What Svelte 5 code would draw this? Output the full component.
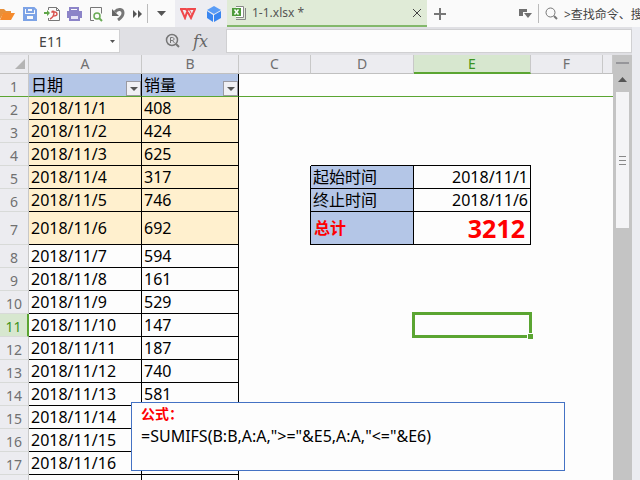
<script lang="ts">
  type Row = { date: string; sales: string };

  const columns = ['A', 'B', 'C', 'D', 'E', 'F', ''];

  const rows: Row[] = [
    { date: '2018/11/1', sales: '408' },
    { date: '2018/11/2', sales: '424' },
    { date: '2018/11/3', sales: '625' },
    { date: '2018/11/4', sales: '317' },
    { date: '2018/11/5', sales: '746' },
    { date: '2018/11/6', sales: '692' },
    { date: '2018/11/7', sales: '594' },
    { date: '2018/11/8', sales: '161' },
    { date: '2018/11/9', sales: '529' },
    { date: '2018/11/10', sales: '147' },
    { date: '2018/11/11', sales: '187' },
    { date: '2018/11/12', sales: '740' },
    { date: '2018/11/13', sales: '581' },
    { date: '2018/11/14', sales: '' },
    { date: '2018/11/15', sales: '' },
    { date: '2018/11/16', sales: '' },
    { date: '', sales: '' }
  ];

  // summary block in D5:E7, keyed by row number
  const summary: Record<number, [string, string]> = {
    5: ['起始时间', '2018/11/1'],
    6: ['终止时间', '2018/11/6'],
    7: ['总计', '3212']
  };

  let cellName = $state('E11');
  let formula = $state('');
  let query = $state('>查找命令、搜');
</script>

<div class="app">
  <header class="topbar">
    <div class="tools">
      <button class="first" aria-label="Open">
        <svg width="16" height="16" viewBox="0 0 16 16">
          <path d="M0 3h4l2 2h5v3H3L0 13z" fill="#e8903a" />
          <path d="M3 7h12l-4 7H0z" fill="#f58a2c" />
        </svg>
      </button>
      <button aria-label="Save">
        <svg width="16" height="16" viewBox="0 0 16 16" fill="none" stroke="#7da3e6" stroke-width="2">
          <path d="M2 2h10l2 2v10H2z" />
          <path d="M5 2v4h6V2M4 14V9h8v5" />
        </svg>
      </button>
      <button aria-label="Export PDF">
        <svg width="17" height="16" viewBox="0 0 17 16" fill="none">
          <path d="M4.500 4V1.500h8l3 3v10h-11V12" stroke="#777" />
          <path d="M12.500 1.500v3h3" stroke="#777" />
          <path d="M6 13c2-1 4-4 4-7 0-1-2-1-2 0 0 0 5-1 5 2 0 2-3 2-4 2" stroke="#d9534f" stroke-width="1.400" />
          <path d="M0 6h3V4l3 3-3 3V8H0z" fill="#5fa548" />
        </svg>
      </button>
      <button aria-label="Print">
        <svg width="16" height="16" viewBox="0 0 16 16">
          <path d="M4 2h8v3H4z" fill="none" stroke="#8c84c8" stroke-width="2" />
          <path d="M1 5h15v7H1z" fill="#8c84c8" />
          <path d="M4 9h9v5H4z" fill="#e6e3f6" stroke="#8c84c8" stroke-width="2" />
        </svg>
      </button>
      <button aria-label="Print preview">
        <svg width="16" height="16" viewBox="0 0 16 16" fill="none">
          <path d="M6 14.500H2.500v-13h11v6" stroke="#777" />
          <circle cx="9" cy="10" r="3" stroke="#6aab55" stroke-width="1.500" />
          <path d="M11 12l3 3" stroke="#6aab55" stroke-width="2" />
        </svg>
      </button>
      <button aria-label="Undo">
        <svg width="14" height="14" viewBox="0 0 14 14">
          <path d="M4 5c3-4 8-3 8 1 0 3-2 5-5 7" fill="none" stroke="#777" stroke-width="3" />
          <path d="M1 2v7h7z" fill="#666" />
        </svg>
      </button>
      <button class="narrow" aria-label="More tools">
        <svg width="10" height="8" viewBox="0 0 10 8" fill="#555">
          <path d="M0 0l4 4-4 4zM5 0l4 4-4 4z" />
        </svg>
      </button>
    </div>
    <span class="divider"></span>
    <button class="menu" aria-label="Customize">
      <svg width="9" height="5" viewBox="0 0 9 5"><path d="M0 0h9L4.500 5z" fill="#555" /></svg>
    </button>
    <div class="home-tabs">
      <button aria-label="WPS home">
        <svg width="16" height="12" viewBox="0 0 16 12" fill="none" stroke="#f0484c" stroke-width="2">
          <path d="M0 1h6l5 9 4-9H8L5 10 1 1" />
          <path d="M9 1l3 6" stroke-width="1" />
        </svg>
      </button>
      <button aria-label="Documents">
        <svg width="16" height="16" viewBox="0 0 16 16">
          <path d="M8 0l7 4-7 4-7-4z" fill="#5a9cf6" />
          <path d="M1 5l6 4v7l-6-4zM15 5L8 9v7l7-4z" fill="#3a86f0" />
        </svg>
      </button>
    </div>
    <div class="file-tab">
      <svg width="15" height="15" viewBox="0 0 15 15" fill="none">
        <path d="M4 1.500h7.500v11H4" fill="#fff" stroke="#888" />
        <path d="M4 14.500h9.500V3" stroke="#888" />
        <path d="M0 3h9v8H0z" fill="#4d9b3a" />
        <path d="M2.500 4.500l4 5M6.500 4.500l-4 5" stroke="#fff" stroke-width="1.500" />
      </svg>
      <span class="file-name">1-1.xlsx *</span>
      <button class="close" aria-label="Close tab">
        <svg width="8" height="8" viewBox="0 0 8 8" stroke="#444"><path d="M0 0l8 8M8 0L0 8" /></svg>
      </button>
    </div>
    <button class="add" aria-label="New tab">
      <svg width="12" height="12" viewBox="0 0 12 12" stroke="#777" stroke-width="2"><path d="M6 0v12M0 6h12" /></svg>
    </button>
    <button class="layout" aria-label="Window list">
      <svg width="13" height="10" viewBox="0 0 13 10" fill="#707070">
        <path d="M0 0h8v3H4v4H0z" />
        <path d="M5 4h8L9 9z" />
      </svg>
    </button>
    <span class="divider"></span>
    <label class="search">
      <svg width="13" height="13" viewBox="0 0 13 13" fill="none" stroke="#777">
        <circle cx="5.500" cy="5.500" r="4.500" />
        <path d="M9 9l3 3" stroke-width="2" />
      </svg>
      <input type="text" aria-label="Search commands" bind:value={query} />
    </label>
  </header>

  <div class="workspace">
    <main>
      <div class="formula-bar">
        <label class="name-box">
          <input type="text" aria-label="Cell name" bind:value={cellName} />
          <svg width="5" height="3" viewBox="0 0 5 3"><path d="M0 0h5L2.500 3z" fill="#555" /></svg>
        </label>
        <div class="formula-tools">
          <button aria-label="Find">
            <svg width="16" height="16" viewBox="0 0 16 16" fill="none" stroke="#777">
              <circle cx="7" cy="7" r="5.500" stroke-width="1.500" />
              <path d="M5.500 10V4.500h2c2 0 2 3 0 3h-2M7.500 7.500l2 2.500" />
              <path d="M11 11l3 3" stroke-width="2" />
            </svg>
          </button>
          <button class="fx" aria-label="Insert function">fx</button>
        </div>
        <input class="formula" type="text" aria-label="Formula" bind:value={formula} />
      </div>

      <div class="body">
        <div class="sheet">
          <table>
            <colgroup>
              <col class="w-num" /><col class="w-a" /><col class="w-b" /><col class="w-c" />
              <col class="w-d" /><col class="w-e" /><col class="w-c" /><col />
            </colgroup>
            <thead>
              <tr>
                <th class="corner"><svg width="10" height="10" viewBox="0 0 10 10"><path d="M10 0v10H0z" fill="#b4b4b4" /></svg></th>
                {#each columns as col}
                  <th class:current={col === 'E'}>{col}</th>
                {/each}
              </tr>
            </thead>
            <tbody>
              <tr class="titles">
                <th>1</th>
                {#each ['日期', '销量'] as title}
                  <td class="data">
                    <div class="title">
                      {title}
                      <button class="filter" aria-label="Filter {title}">
                        <svg width="8" height="4" viewBox="0 0 8 4"><path d="M0 0h8L4 4z" fill="#555" /></svg>
                      </button>
                    </div>
                  </td>
                {/each}
                <td></td><td></td><td></td><td></td><td></td>
              </tr>
              {#each rows as row, i}
                {@const n = i + 2}
                <tr class:picked={n < 8} class:tall={n === 7}>
                  <th class:current={n === 11}>{n < 18 ? n : ''}</th>
                  <td class="data">{row.date}</td>
                  <td class="data">{row.sales}</td>
                  {#if summary[n]}
                    <td class="edge-right"></td>
                    <td class="data caption" class:total={n === 7}>{summary[n][0]}</td>
                    <td class="data value" class:total={n === 7}>{summary[n][1]}</td>
                  {:else}
                    <td></td>
                    <td class:edge-bottom={n === 4}></td>
                    <td class:edge-bottom={n === 4} class:selected={n === 11}></td>
                  {/if}
                  <td></td>
                  <td></td>
                </tr>
              {/each}
            </tbody>
          </table>
          <div class="note">
            <strong>公式：</strong>
            <span>=SUMIFS(B:B,A:A,"&gt;="&amp;E5,A:A,"&lt;="&amp;E6)</span>
          </div>
        </div>
        <div class="scrollbar">
          <span class="split"></span>
          <button aria-label="Scroll up">
            <svg width="9" height="5" viewBox="0 0 9 5"><path d="M0 5h9L4.500 0z" fill="#555" /></svg>
          </button>
          <div class="thumb"><i></i><i></i><i></i></div>
        </div>
      </div>
    </main>
    <aside></aside>
  </div>
</div>

<style>
  .app {
    display: flex;
    flex-direction: column;
    height: 100vh;
    overflow: hidden;
    background: #fdfdfd;
    color: #000;
    font-family: 'Noto Sans', 'Noto Sans CJK SC', sans-serif;
    font-size: 16px;
  }

  button {
    display: flex;
    align-items: center;
    justify-content: center;
    flex-shrink: 0;
    padding: 0;
    border: 0;
    background: none;
  }

  input {
    min-width: 0;
    padding: 0;
    border: 0;
    outline: 0;
    background: none;
    font-family: inherit;
  }

  svg {
    display: block;
    flex-shrink: 0;
  }

  .topbar {
    display: flex;
    align-items: stretch;
    height: 27px;
    flex-shrink: 0;
    background: #fafafa;
  }

  .tools {
    display: flex;
  }

  .tools button {
    width: 22px;
  }

  .tools .first {
    width: 19px;
    justify-content: flex-start;
  }

  .tools .narrow {
    width: 18px;
  }

  .divider {
    width: 1px;
    margin: 4px 0;
    background: #bbb;
  }

  .menu {
    width: 27px;
  }

  .home-tabs {
    display: flex;
    background: #ededf2;
  }

  .home-tabs button {
    width: 26px;
  }

  .file-tab {
    display: flex;
    align-items: center;
    box-sizing: border-box;
    width: 200px;
    padding: 0 6px 0 5px;
    border-bottom: 2px solid #83b86b;
    background: #e0ebd7;
  }

  .file-name {
    flex: 1;
    padding-left: 5px;
    color: #555;
    font-size: 12px;
  }

  .add {
    width: 26px;
  }

  .layout {
    width: 25px;
    margin-left: auto;
  }

  .search {
    display: flex;
    align-items: center;
    gap: 6px;
    width: 95px;
    padding-left: 6px;
  }

  .search input {
    flex: 1;
    color: #444;
    font-size: 12px;
  }

  .workspace {
    display: flex;
    flex: 1;
    min-height: 0;
  }

  main {
    display: flex;
    flex: 1;
    flex-direction: column;
    min-width: 0;
  }

  aside {
    width: 8px;
    background: #ebecf1;
  }

  .formula-bar {
    display: flex;
    height: 24px;
    flex-shrink: 0;
    padding: 2px 0;
    background: #e0e0e4;
  }

  .name-box {
    display: flex;
    align-items: center;
    box-sizing: border-box;
    width: 120px;
    padding-right: 4px;
    border: 1px solid #d0d0d2;
    border-left: 0;
    background: #fdfdfd;
  }

  .name-box input {
    flex: 1;
    padding-left: 12px;
    padding-right: 20px;
    color: #444;
    font-size: 14px;
    text-align: center;
  }

  .formula-tools {
    display: flex;
    align-items: center;
    justify-content: flex-end;
    gap: 12px;
    width: 106px;
    padding-right: 18px;
    box-sizing: border-box;
  }

  .fx {
    color: #666;
    font-family: 'DejaVu Serif', serif;
    font-size: 16px;
    font-style: italic;
  }

  .formula {
    flex: 1;
    border: 1px solid #d0d0d2;
    background: #fdfdfd;
  }

  .body {
    display: flex;
    flex: 1;
    min-height: 0;
  }

  .sheet {
    position: relative;
    flex: 1;
    overflow: hidden;
  }

  table {
    width: 100%;
    table-layout: fixed;
    border-spacing: 0;
  }

  .w-num { width: 29px; }
  .w-a { width: 113px; }
  .w-b { width: 97px; }
  .w-c { width: 72px; }
  .w-d { width: 103px; }
  .w-e { width: 117px; }

  th {
    box-sizing: border-box;
    padding: 0;
    border-right: 1px solid #c8c8c8;
    border-bottom: 1px solid #d8dad8;
    background: #ececf0;
    color: #707070;
    font-size: 14px;
    font-weight: normal;
    line-height: 18px;
  }

  thead th {
    height: 19px;
    border-bottom-color: #c0c0c0;
  }

  .corner svg {
    margin-left: auto;
    margin-right: 3px;
  }

  th.current {
    background: #d7e7cf;
    color: #3d9320;
  }

  thead th.current {
    border-bottom: 2px solid #5ba532;
    line-height: 17px;
  }

  tbody th {
    padding-top: 3px;
  }

  tbody th.current {
    border-right: 2px solid #5ba532;
  }

  td {
    box-sizing: border-box;
    height: 23px;
    padding: 0;
    line-height: 22px;
    white-space: nowrap;
  }

  .data {
    padding-left: 2px;
    border-right: 1px solid #000;
    border-bottom: 1px solid #000;
  }

  .titles th,
  .titles td {
    border-bottom: 1px solid #5ba532;
  }

  .titles .data,
  .caption {
    background: #b4c6e7;
  }

  .title {
    display: flex;
    align-items: flex-end;
    justify-content: space-between;
    height: 22px;
  }

  .filter {
    box-sizing: border-box;
    width: 15px;
    height: 15px;
    border: 1px solid #9a9aa2;
    background: #f0f0f4;
  }

  .picked .data:nth-child(-n + 3) {
    background: #fff0ce;
  }

  .tall td {
    height: 33px;
  }

  .edge-right {
    border-right: 1px solid #000;
  }

  .edge-bottom {
    border-bottom: 1px solid #000;
  }

  .value {
    padding-right: 2px;
    text-align: right;
  }

  .total {
    padding-left: 3px;
    color: #f00;
    font-weight: bold;
  }

  .value.total {
    padding-right: 5px;
    font-size: 25px;
  }

  .selected {
    position: relative;
  }

  .selected::before {
    content: '';
    position: absolute;
    inset: -2px -1px -1px -2px;
    border: 3px solid #5ba532;
  }

  .selected::after {
    content: '';
    position: absolute;
    right: -3px;
    bottom: -3px;
    width: 5px;
    height: 5px;
    border: 1px solid #fdfdfd;
    background: #5ba532;
  }

  .note {
    position: absolute;
    top: 347px;
    left: 131px;
    display: flex;
    flex-direction: column;
    box-sizing: border-box;
    width: 434px;
    height: 69px;
    padding: 0 9px;
    border: 1px solid #4472c4;
    background: #fdfdfd;
    font-size: 16px;
    line-height: 22px;
  }

  .note strong {
    color: #f00;
    font-size: 14px;
  }

  .scrollbar {
    display: flex;
    flex-direction: column;
    align-items: center;
    width: 19px;
    background: #c4c4c4;
  }

  .split {
    width: 13px;
    height: 2px;
    margin-top: 7px;
    background: #96969a;
  }

  .scrollbar button {
    width: 15px;
    height: 28px;
    padding-top: 3px;
  }

  .thumb {
    display: flex;
    flex-direction: column;
    align-items: center;
    justify-content: center;
    gap: 3px;
    width: 13px;
    height: 136px;
    background: #f4f4f6;
  }

  .thumb i {
    width: 7px;
    height: 1px;
    background: #888;
  }
</style>
